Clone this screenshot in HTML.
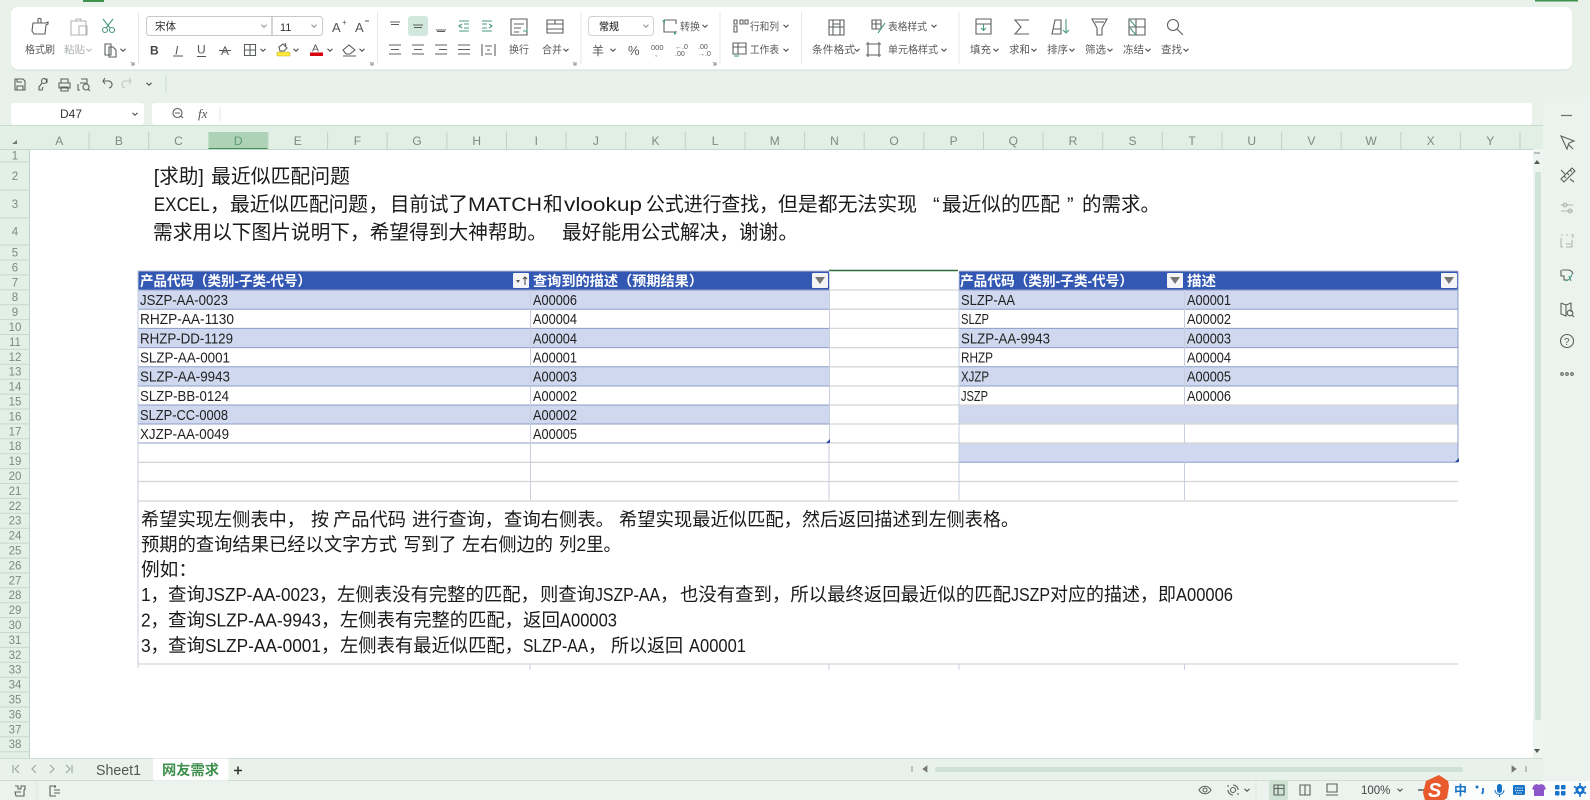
<!DOCTYPE html>
<html lang="zh-CN"><head><meta charset="utf-8"><title>网友需求</title>
<style>
html,body{margin:0;padding:0;background:#e8f2ea;width:1590px;height:800px;overflow:hidden}
svg{display:block}
text{font-family:"Liberation Sans","Noto Sans CJK SC",sans-serif;white-space:pre}
.i{fill:none;stroke:#5b605d;stroke-width:1.1}
.g{fill:none;stroke:#b0b6b2;stroke-width:1.1}
.t{fill:#4a9a80;stroke:none}
.tl{fill:none;stroke:#4a9a80;stroke-width:1.1}
.c{fill:none;stroke:#555;stroke-width:1.1}
.r{font-size:10.5px;fill:#585c59}
.ch{font-size:12px;fill:#7c8a80;text-anchor:middle}
.rh{font-size:11.5px;fill:#7c8a80;text-anchor:middle}
.h{font-size:14px;font-weight:700;fill:#fff}
.d{font-size:15px;fill:#222}
.m{font-size:19.7px;fill:#1a1a1a}
.p{font-size:18.5px;fill:#1a1a1a}
</style></head><body>
<svg xmlns="http://www.w3.org/2000/svg" width="1590" height="800" viewBox="0 0 1590 800">
<defs><path id="v" d="M-2.5-1.2L0 1.2L2.5-1.2" fill="none" stroke="#555" stroke-width="1.1"/></defs>
<rect width="1590" height="800" fill="#e8f2ea"/>
<rect x="83" y="0" width="21" height="2" fill="#3f9350"/>
<rect x="1535" y="0" width="43" height="1.5" fill="#3f9350"/>
<rect x="11" y="8" width="1561" height="62.5" rx="7" fill="#d4ddd7"/>
<rect x="11" y="7" width="1561" height="62.5" rx="7" fill="#fff"/>
<path d="M138.5 12V64M377.5 12V64M581 12V64M720 12V64M801.5 12V64M959 12V64" stroke="#e4e9e5"/>

<!-- clipboard -->
<path class="i" d="M33 23h13l2-1v2l-2 1-1 9H34l-2-3zM38 23v-4a2 2 0 0 1 3 0v4"/>
<text class="r" x="25" y="53" textLength="30" lengthAdjust="spacingAndGlyphs">格式刷</text>
<path class="g" d="M71 21h15v14H71zM76 21v-2h5v2M79 26h8v9h-8z"/>
<text class="r" x="64" y="53" textLength="21" lengthAdjust="spacingAndGlyphs" style="fill:#aab0ac">粘贴</text>
<use href="#v" x="89" y="50" opacity=".4"/>
<path class="tl" d="M103 19l7 9M113 19l-7 9"/><circle class="tl" cx="105" cy="30" r="2.5"/><circle class="tl" cx="112" cy="30" r="2.5"/>
<path class="i" d="M105 44h6v11h-6zM109 47h4l3 3v7h-7z"/>
<use href="#v" x="123" y="50"/>
<path d="M131 62l3 3M134 62v3h-3" class="c" opacity=".6"/>

<!-- font -->
<rect x="146.500" y="16.500" width="176" height="19" rx="3" fill="#fff" stroke="#c4cac6"/>
<path d="M272 16.500V35.500" stroke="#a8aeaa"/>
<text x="155" y="30" font-size="11" fill="#333" textLength="21" lengthAdjust="spacingAndGlyphs">宋体</text>
<use href="#v" x="264" y="26" opacity=".6"/>
<text x="280" y="31" font-size="11" fill="#333">11</text>
<use href="#v" x="314" y="26" opacity=".6"/>
<text x="332" y="32" font-size="13" fill="#555">A</text><text x="342" y="25" font-size="8" fill="#555">+</text>
<text x="355" y="32" font-size="13" fill="#555">A</text><path d="M365 21h4" stroke="#555"/>
<text x="150" y="54.500" font-size="12" font-weight="700" fill="#444">B</text>
<text x="175" y="54.500" font-size="12" font-style="italic" fill="#555">I</text><path d="M173 56h10" stroke="#555"/>
<text x="197" y="53.500" font-size="12" fill="#555">U</text><path d="M197 56.500h9" stroke="#555"/>
<text x="221" y="55" font-size="12" fill="#555">A</text><path d="M219 50.500h12" stroke="#555"/>
<path class="i" d="M244.500 44.500h11v11h-11zM250 44.500v11M244.500 50h11"/><use href="#v" x="263" y="50"/>
<path class="i" d="M279 47l4-3 4 4-3 3-4 0zM285 43l1 3"/><rect x="277" y="52" width="13" height="4" rx="1" fill="#ffe93b" stroke="#c2b52c" stroke-width=".6"/><use href="#v" x="296" y="50"/>
<text x="312" y="51.500" font-size="10.500" fill="#555">A</text><rect x="310" y="52.500" width="13" height="3.500" fill="#d6000f"/><use href="#v" x="330" y="50"/>
<path class="i" d="M343 50l6-5 6 5-5 4h-4zM343 56h13"/><use href="#v" x="362" y="50"/>
<path d="M370 62l3 3M373 62v3h-3" class="c" opacity=".6"/>

<!-- align -->
<rect x="408" y="16" width="20" height="20" rx="3" fill="#d2e7de"/>
<path class="i" d="M390 22h10M391 24.500h8M413 25h10M414 27.500h8M436 30h10M437 31.500h8"/>
<path class="tl" d="M459 21h10M459 31h10M464 24h5M464 28h5M462 24l-3 2 3 2"/><path class="tl" d="M482 21h10M482 31h10M482 24h5M482 28h5M489 24l3 2-3 2"/>
<path class="i" d="M389 45h12M391 49.500h8M389 54h12M412 45h12M414 49.500h8M412 54h12M435 45h12M439 49.500h8M435 54h12M458 45h12M458 49.500h12M458 54h12"/>
<path class="i" d="M482 44v12M495 44v12M485 46h7M485 54h7M487 50h3"/>
<path class="i" d="M511 19h16v16h-16zM514 24h10M514 28h7M514 32h5"/><path class="tl" d="M527 28v3h-4"/>
<text class="r" x="509" y="53" textLength="20" lengthAdjust="spacingAndGlyphs">换行</text>
<path class="i" d="M547 20h16v13h-16zM547 24h16M547 29h16M555 20v4"/>
<text class="r" x="542" y="53" textLength="20" lengthAdjust="spacingAndGlyphs">合并</text><use href="#v" x="566" y="50"/>
<path d="M573 62l3 3M576 62v3h-3" class="c" opacity=".6"/>

<!-- number -->
<rect x="588.500" y="16.500" width="65" height="19" rx="3" fill="#fff" stroke="#d0d5d1"/>
<text x="599" y="30" font-size="10.500" font-weight="500" fill="#333" textLength="20" lengthAdjust="spacingAndGlyphs">常规</text>
<use href="#v" x="646" y="26" opacity=".6"/>
<path class="i" d="M664 20h12v4M664 21v11h11M676 32v-1"/><path class="t" d="M662 21l3-2v4zM677 33l-3 2v-4z"/>
<text class="r" x="680" y="30" textLength="20" lengthAdjust="spacingAndGlyphs">转换</text><use href="#v" x="705" y="26"/>
<text x="592" y="55" font-size="12" fill="#555" textLength="12" lengthAdjust="spacingAndGlyphs">羊</text><use href="#v" x="613" y="50"/>
<text x="628" y="55" font-size="13" fill="#555">%</text>
<text x="651" y="50" font-size="7.500" fill="#555">000</text><text x="655" y="56" font-size="7.500" fill="#555">,</text>
<text x="675" y="49" font-size="7" fill="#555">←.0</text><text x="675" y="56" font-size="7" fill="#555">.00</text>
<text x="698" y="49" font-size="7" fill="#555">.00</text><text x="698" y="56" font-size="7" fill="#555">→.0</text>
<path d="M713 62l3 3M716 62v3h-3" class="c" opacity=".6"/>

<path class="i" d="M734 20h3v4h-3zM734 26h3v6h-3zM740 20h3v4h-3zM745 20h3v4h-3z"/>
<text class="r" x="750" y="30" textLength="29" lengthAdjust="spacingAndGlyphs">行和列</text><use href="#v" x="786" y="26"/>
<path class="i" d="M733 43h13v11h-13zM733 47h13M738 43v11"/><path class="tl" d="M734 56h5"/>
<text class="r" x="750" y="53" textLength="29" lengthAdjust="spacingAndGlyphs">工作表</text><use href="#v" x="786" y="50"/>

<path class="i" d="M829 20h15v15h-15zM833 20v15M840 20v15M829 27h15M833 24h7"/>
<text class="r" x="812" y="53" textLength="43" lengthAdjust="spacingAndGlyphs">条件格式</text><use href="#v" x="857" y="50"/>
<path class="i" d="M872 20h9v9h-9zM876 20v9M872 24h9"/><path class="tl" d="M878 33l7-10"/>
<text class="r" x="888" y="30" textLength="39" lengthAdjust="spacingAndGlyphs">表格样式</text><use href="#v" x="934" y="26"/>
<path class="i" d="M868 44h11v11h-11zM868 42v15M879 42v15M866 44h15M866 55h15"/>
<text class="r" x="888" y="53" textLength="50" lengthAdjust="spacingAndGlyphs">单元格样式</text><use href="#v" x="944" y="50"/>

<!-- edit -->
<path class="i" d="M976 19h15v15h-15zM976 24h15"/><path class="tl" d="M983.500 24v6M981 28l2.500 2.500 2.500-2.500"/>
<text class="r" x="970" y="53" textLength="21" lengthAdjust="spacingAndGlyphs">填充</text><use href="#v" x="996" y="50"/>
<path class="i" d="M1029 20h-14l6 7-6 7h14"/>
<text class="r" x="1009" y="53" textLength="21" lengthAdjust="spacingAndGlyphs">求和</text><use href="#v" x="1034" y="50"/>
<path class="i" d="M1055 20h6v14h-9zM1053 29h8"/><path class="tl" d="M1066 19v14M1063 30l3 3 3-3"/>
<text class="r" x="1047" y="53" textLength="21" lengthAdjust="spacingAndGlyphs">排序</text><use href="#v" x="1072" y="50"/>
<path class="i" d="M1092 19h15l-5 9v7h-5v-7z"/><path class="i" d="M1095 22h9"/>
<text class="r" x="1085" y="53" textLength="21" lengthAdjust="spacingAndGlyphs">筛选</text><use href="#v" x="1110" y="50"/>
<path class="i" d="M1129 19h16v16h-16zM1136 19v16M1129 27h16"/><path class="tl" d="M1130 20l6 7M1130 28l6 7"/>
<text class="r" x="1123" y="53" textLength="21" lengthAdjust="spacingAndGlyphs">冻结</text><use href="#v" x="1148" y="50"/>
<circle class="i" cx="1173" cy="25" r="5.500"/><path class="i" d="M1177 29l6 6"/>
<text class="r" x="1161" y="53" textLength="21" lengthAdjust="spacingAndGlyphs">查找</text><use href="#v" x="1186" y="50"/>

<!-- QAT -->
<path class="i" d="M15 79h8l2 2v9H15zM17 90v-4h6v4M17 79v3h5"/>
<circle class="i" cx="44" cy="81" r="2.500"/><path class="i" d="M42 83l-3 4v3h3l1-3M44 79h3v4"/>
<path class="i" d="M59 83h11v5H59zM61 83v-4h7v4M61 87h7v4h-7z"/>
<path class="i" d="M80 83h8M81 79h6v3M80 90h-2v-6"/><circle class="i" cx="86" cy="87" r="3"/><path class="i" d="M88 89l2 2"/>
<path class="i" d="M103 81h5a3.500 3.500 0 0 1 1 7M105 78l-2 3 2 3"/>
<path class="g" d="M131 81h-5a3.500 3.500 0 0 0-1 7M129 78l2 3-2 3" opacity=".7"/>
<use href="#v" x="149" y="84"/>
<path d="M166 76v16" stroke="#cdd9d0"/>

<!-- formula bar -->
<rect x="1543" y="97" width="47" height="683" fill="#ecf3ee"/>
<rect x="11" y="103" width="133" height="22" rx="3" fill="#fff"/>
<text x="60" y="118" font-size="12" fill="#333">D47</text><use href="#v" x="135" y="114"/>
<rect x="152" y="103" width="1380" height="22" rx="3" fill="#fff"/>
<circle class="i" cx="177.500" cy="113" r="4.500"/><path class="i" d="M175 113h5M181 116l2 2"/>
<text x="198" y="118" font-size="13" font-style="italic" fill="#555" style="font-family:'Liberation Serif',serif">fx</text>
<path d="M220 107v14" stroke="#e2e7e3"/>

<!-- col headers -->
<rect x="0" y="125" width="1543" height="25" fill="#e1efe5"/>
<path d="M0 125.500H1543" stroke="#cadccf"/>
<rect x="208.400" y="132" width="59.600" height="16" fill="#aed2b6"/>
<rect x="208.400" y="148" width="59.600" height="1.500" fill="#3f9350"/>
<path d="M89.100 132V149M148.700 132V149M268 132V149M327.600 132V149M387.200 132V149M446.900 132V149M506.500 132V149M566.100 132V149M625.700 132V149M685.300 132V149M745 132V149M804.600 132V149M864.200 132V149M923.800 132V149M983.500 132V149M1043.100 132V149M1102.700 132V149M1162.300 132V149M1221.900 132V149M1281.600 132V149M1341.200 132V149M1400.800 132V149M1460.400 132V149M1520 132V149" stroke="#c0d2c6"/>
<path d="M12 144l5-4v4z" fill="#777"/>
<text class="ch" x="59.300" y="145">A</text><text class="ch" x="118.900" y="145">B</text><text class="ch" x="178.500" y="145">C</text><text class="ch" x="238.200" y="145" style="fill:#5f9c6f">D</text><text class="ch" x="297.800" y="145">E</text><text class="ch" x="357.400" y="145">F</text><text class="ch" x="417" y="145">G</text><text class="ch" x="476.700" y="145">H</text><text class="ch" x="536.300" y="145">I</text><text class="ch" x="595.900" y="145">J</text><text class="ch" x="655.500" y="145">K</text><text class="ch" x="715.100" y="145">L</text><text class="ch" x="774.800" y="145">M</text><text class="ch" x="834.400" y="145">N</text><text class="ch" x="894" y="145">O</text><text class="ch" x="953.600" y="145">P</text><text class="ch" x="1013.300" y="145">Q</text><text class="ch" x="1072.900" y="145">R</text><text class="ch" x="1132.500" y="145">S</text><text class="ch" x="1192.100" y="145">T</text><text class="ch" x="1251.700" y="145">U</text><text class="ch" x="1311.400" y="145">V</text><text class="ch" x="1371" y="145">W</text><text class="ch" x="1430.600" y="145">X</text><text class="ch" x="1490.200" y="145">Y</text>

<!-- sheet -->
<rect x="29.500" y="149" width="1503.500" height="610" fill="#fff"/>
<rect x="0" y="149" width="29.500" height="610" fill="#e3f0e6"/>
<path d="M29.500 149V759" stroke="#bfd2c5"/>
<path d="M0 149.500H1533" stroke="#c6d8cc"/>
<path d="M0 162h29M0 190h29M0 218h29M0 245h29M0 260h29M0 274.900h29M0 289.800h29M0 304.700h29M0 319.600h29M0 334.500h29M0 349.400h29M0 364.300h29M0 379.200h29M0 394.100h29M0 409h29M0 423.900h29M0 438.800h29M0 453.700h29M0 468.600h29M0 483.500h29M0 498.400h29M0 513.300h29M0 528.200h29M0 543.100h29M0 558h29M0 572.900h29M0 587.800h29M0 602.700h29M0 617.600h29M0 632.500h29M0 647.400h29M0 662.300h29M0 677.200h29M0 692.100h29M0 707h29M0 721.900h29M0 736.800h29M0 751.700h29" stroke="#c6d8cc"/>
<text class="rh" x="15" y="159.500">1</text><text class="rh" x="15" y="180">2</text><text class="rh" x="15" y="208">3</text><text class="rh" x="15" y="235.500">4</text><text class="rh" x="15" y="256.500">5</text><text class="rh" x="15" y="271.400">6</text><text class="rh" x="15" y="286.300">7</text><text class="rh" x="15" y="301.200">8</text><text class="rh" x="15" y="316.100">9</text><text class="rh" x="15" y="331">10</text><text class="rh" x="15" y="345.900">11</text><text class="rh" x="15" y="360.800">12</text><text class="rh" x="15" y="375.700">13</text><text class="rh" x="15" y="390.600">14</text><text class="rh" x="15" y="405.500">15</text><text class="rh" x="15" y="420.400">16</text><text class="rh" x="15" y="435.300">17</text><text class="rh" x="15" y="450.200">18</text><text class="rh" x="15" y="465.100">19</text><text class="rh" x="15" y="480">20</text><text class="rh" x="15" y="494.900">21</text><text class="rh" x="15" y="509.800">22</text><text class="rh" x="15" y="524.700">23</text><text class="rh" x="15" y="539.600">24</text><text class="rh" x="15" y="554.500">25</text><text class="rh" x="15" y="569.400">26</text><text class="rh" x="15" y="584.300">27</text><text class="rh" x="15" y="599.200">28</text><text class="rh" x="15" y="614.100">29</text><text class="rh" x="15" y="629">30</text><text class="rh" x="15" y="643.900">31</text><text class="rh" x="15" y="658.800">32</text><text class="rh" x="15" y="673.700">33</text><text class="rh" x="15" y="688.600">34</text><text class="rh" x="15" y="703.500">35</text><text class="rh" x="15" y="718.400">36</text><text class="rh" x="15" y="733.300">37</text><text class="rh" x="15" y="748.200">38</text>

<!-- title -->
<text class="m" x="153.800" y="183" textLength="50" lengthAdjust="spacingAndGlyphs">[求助]</text>
<text class="m" x="211" y="183" textLength="139" lengthAdjust="spacingAndGlyphs">最近似匹配问题</text>
<text class="m" x="153.800" y="211" textLength="56" lengthAdjust="spacingAndGlyphs">EXCEL</text>
<text class="m" x="210" y="211">，</text>
<text class="m" x="230" y="211" textLength="138" lengthAdjust="spacingAndGlyphs">最近似匹配问题</text>
<text class="m" x="368.500" y="211">，</text>
<text class="m" x="390" y="211" textLength="78" lengthAdjust="spacingAndGlyphs">目前试了</text>
<text class="m" x="468" y="211" textLength="74" lengthAdjust="spacingAndGlyphs">MATCH</text>
<text class="m" x="543" y="211">和</text>
<text class="m" x="564" y="211" textLength="78" lengthAdjust="spacingAndGlyphs">vlookup</text>
<text class="m" x="646" y="211" textLength="132" lengthAdjust="spacingAndGlyphs">公式进行查找，</text>
<text class="m" x="778" y="211" textLength="139" lengthAdjust="spacingAndGlyphs">但是都无法实现</text>
<text class="m" x="933" y="211">“</text>
<text class="m" x="942" y="211" textLength="118" lengthAdjust="spacingAndGlyphs">最近似的匹配</text>
<text class="m" x="1067" y="211">”</text>
<text class="m" x="1082" y="211" textLength="78" lengthAdjust="spacingAndGlyphs">的需求。</text>
<text class="m" x="153" y="239" textLength="394" lengthAdjust="spacingAndGlyphs">需求用以下图片说明下，希望得到大神帮助。</text>
<text class="m" x="562" y="239" textLength="236" lengthAdjust="spacingAndGlyphs">最好能用公式解决，谢谢。</text>

<!-- table bands -->
<rect x="138" y="271" width="691" height="19" fill="#3358b4"/>
<rect x="959" y="271" width="499" height="19" fill="#3358b4"/>
<rect x="138" y="290" width="691" height="19.200" fill="#cfd8ee"/>
<rect x="138" y="328.400" width="691" height="19.200" fill="#cfd8ee"/>
<rect x="138" y="366.800" width="691" height="19.200" fill="#cfd8ee"/>
<rect x="138" y="405" width="691" height="19" fill="#cfd8ee"/>
<rect x="959" y="290" width="499" height="19.200" fill="#cfd8ee"/>
<rect x="959" y="328.400" width="499" height="19.200" fill="#cfd8ee"/>
<rect x="959" y="366.800" width="499" height="19.200" fill="#cfd8ee"/>
<rect x="959" y="405" width="499" height="19" fill="#cfd8ee"/>
<rect x="959" y="443" width="499" height="19.300" fill="#cfd8ee"/>
<path d="M138 290H829M138 309.200H829M138 328.400H829M138 347.600H829M138 366.800H829M138 386H829M138 405H829M138 424H829M138 443H829M959 290H1458M959 309.200H1458M959 328.400H1458M959 347.600H1458M959 366.800H1458M959 386H1458M959 462.300H1458" stroke="#8c9dca" stroke-width="1"/>
<path d="M829 290H959M829 309.200H959M829 328.400H959M829 347.600H959M829 366.800H959M829 386H959M829 405H959M829 424H959M829 443H959M138 462.300H959M138 481.500H1458M959 405H1458M959 424H1458M959 443H1458M138 501H1458M138 664H1458" stroke="#d5d5d8" stroke-width="1.300"/>
<path d="M829.500 273V443M959 273V500M138 271V668M530.500 290V500M1184.500 290V405M1184.500 424V443M1184.500 462V500M530 664V670M829 443V500M829 664V670M959 664V670M1184.500 664V670" stroke="#c6cedf" stroke-width="1"/>
<path d="M1458 271V462" stroke="#8c9dca"/>
<path d="M829 270.500H958" stroke="#2f6b3d" stroke-width="1.500"/>
<path d="M138 271H829M959 271H1458" stroke="#b6bcc8"/>
<path d="M826 443l4-4v4zM1455 462l4-4v4z" fill="#2b4ea4"/>

<!-- header text -->
<text class="h" x="140" y="286" textLength="171" lengthAdjust="spacingAndGlyphs">产品代码（类别-子类-代号）</text>
<text class="h" x="533" y="286" textLength="170" lengthAdjust="spacingAndGlyphs">查询到的描述（预期结果）</text>
<text class="h" x="960" y="286" textLength="173" lengthAdjust="spacingAndGlyphs">产品代码（类别-子类-代号）</text>
<text class="h" x="1187" y="286" textLength="29" lengthAdjust="spacingAndGlyphs">描述</text>
<rect x="513" y="273" width="16" height="15" rx="1" fill="#f4f4f6"/><path d="M516 280h4l-2 3z" fill="#555"/><path d="M525 277v8M523 279l2-2 2 2" stroke="#444" fill="none"/>
<rect x="812" y="273" width="16" height="15" rx="1" fill="#f4f4f6"/><path d="M815 277h10l-5 7z" fill="#777"/>
<rect x="1167" y="273" width="16" height="15" rx="1" fill="#f4f4f6"/><path d="M1170 277h10l-5 7z" fill="#777"/>
<rect x="1441" y="273" width="16" height="15" rx="1" fill="#f4f4f6"/><path d="M1444 277h10l-5 7z" fill="#777"/>

<!-- data -->
<text class="d" x="140" y="305" textLength="88" lengthAdjust="spacingAndGlyphs">JSZP-AA-0023</text>
<text class="d" x="140" y="324" textLength="94" lengthAdjust="spacingAndGlyphs">RHZP-AA-1130</text>
<text class="d" x="140" y="343.500" textLength="93" lengthAdjust="spacingAndGlyphs">RHZP-DD-1129</text>
<text class="d" x="140" y="362.500" textLength="90" lengthAdjust="spacingAndGlyphs">SLZP-AA-0001</text>
<text class="d" x="140" y="381.500" textLength="90" lengthAdjust="spacingAndGlyphs">SLZP-AA-9943</text>
<text class="d" x="140" y="401" textLength="89" lengthAdjust="spacingAndGlyphs">SLZP-BB-0124</text>
<text class="d" x="140" y="420" textLength="88" lengthAdjust="spacingAndGlyphs">SLZP-CC-0008</text>
<text class="d" x="140" y="439" textLength="89" lengthAdjust="spacingAndGlyphs">XJZP-AA-0049</text>
<text class="d" x="533" y="305" textLength="44" lengthAdjust="spacingAndGlyphs">A00006</text>
<text class="d" x="533" y="324" textLength="44" lengthAdjust="spacingAndGlyphs">A00004</text>
<text class="d" x="533" y="343.500" textLength="44" lengthAdjust="spacingAndGlyphs">A00004</text>
<text class="d" x="533" y="362.500" textLength="44" lengthAdjust="spacingAndGlyphs">A00001</text>
<text class="d" x="533" y="381.500" textLength="44" lengthAdjust="spacingAndGlyphs">A00003</text>
<text class="d" x="533" y="401" textLength="44" lengthAdjust="spacingAndGlyphs">A00002</text>
<text class="d" x="533" y="420" textLength="44" lengthAdjust="spacingAndGlyphs">A00002</text>
<text class="d" x="533" y="439" textLength="44" lengthAdjust="spacingAndGlyphs">A00005</text>
<text class="d" x="961" y="305" textLength="54" lengthAdjust="spacingAndGlyphs">SLZP-AA</text>
<text class="d" x="961" y="324" textLength="28" lengthAdjust="spacingAndGlyphs">SLZP</text>
<text class="d" x="961" y="343.500" textLength="89" lengthAdjust="spacingAndGlyphs">SLZP-AA-9943</text>
<text class="d" x="961" y="362.500" textLength="32" lengthAdjust="spacingAndGlyphs">RHZP</text>
<text class="d" x="961" y="381.500" textLength="28" lengthAdjust="spacingAndGlyphs">XJZP</text>
<text class="d" x="961" y="401" textLength="27" lengthAdjust="spacingAndGlyphs">JSZP</text>
<text class="d" x="1187" y="305" textLength="44" lengthAdjust="spacingAndGlyphs">A00001</text>
<text class="d" x="1187" y="324" textLength="44" lengthAdjust="spacingAndGlyphs">A00002</text>
<text class="d" x="1187" y="343.500" textLength="44" lengthAdjust="spacingAndGlyphs">A00003</text>
<text class="d" x="1187" y="362.500" textLength="44" lengthAdjust="spacingAndGlyphs">A00004</text>
<text class="d" x="1187" y="381.500" textLength="44" lengthAdjust="spacingAndGlyphs">A00005</text>
<text class="d" x="1187" y="401" textLength="44" lengthAdjust="spacingAndGlyphs">A00006</text>

<!-- paragraph -->
<text class="p" x="141" y="526" textLength="164" lengthAdjust="spacingAndGlyphs">希望实现左侧表中，</text>
<text class="p" x="311" y="526" textLength="18" lengthAdjust="spacingAndGlyphs">按</text>
<text class="p" x="333" y="526" textLength="73" lengthAdjust="spacingAndGlyphs">产品代码</text>
<text class="p" x="412" y="526" textLength="91" lengthAdjust="spacingAndGlyphs">进行查询，</text>
<text class="p" x="504" y="526" textLength="110" lengthAdjust="spacingAndGlyphs">查询右侧表。</text>
<text class="p" x="619" y="526" textLength="183" lengthAdjust="spacingAndGlyphs">希望实现最近似匹配，</text>
<text class="p" x="802" y="526" textLength="217" lengthAdjust="spacingAndGlyphs">然后返回描述到左侧表格。</text>

<text class="p" x="141" y="551" textLength="256" lengthAdjust="spacingAndGlyphs">预期的查询结果已经以文字方式</text>
<text class="p" x="403.500" y="551" textLength="53" lengthAdjust="spacingAndGlyphs">写到了</text>
<text class="p" x="462" y="551" textLength="91" lengthAdjust="spacingAndGlyphs">左右侧边的</text>
<text class="p" x="559" y="551" textLength="62" lengthAdjust="spacingAndGlyphs">列2里。</text>

<text class="p" x="141" y="576" textLength="56" lengthAdjust="spacingAndGlyphs">例如：</text>

<text class="p" x="141" y="601" textLength="27" lengthAdjust="spacingAndGlyphs">1，</text>
<text class="p" x="168" y="601" textLength="37" lengthAdjust="spacingAndGlyphs">查询</text>
<text class="p" x="205" y="601" textLength="114" lengthAdjust="spacingAndGlyphs">JSZP-AA-0023</text>
<text class="p" x="319" y="601">，</text>
<text class="p" x="337" y="601" textLength="202" lengthAdjust="spacingAndGlyphs">左侧表没有完整的匹配，</text>
<text class="p" x="540" y="601" textLength="55" lengthAdjust="spacingAndGlyphs">则查询</text>
<text class="p" x="595" y="601" textLength="65" lengthAdjust="spacingAndGlyphs">JSZP-AA</text>
<text class="p" x="660" y="601">，</text>
<text class="p" x="680" y="601" textLength="331" lengthAdjust="spacingAndGlyphs">也没有查到，所以最终返回最近似的匹配</text>
<text class="p" x="1011" y="601" textLength="39" lengthAdjust="spacingAndGlyphs">JSZP</text>
<text class="p" x="1050" y="601" textLength="126" lengthAdjust="spacingAndGlyphs">对应的描述，即</text>
<text class="p" x="1176" y="601" textLength="57" lengthAdjust="spacingAndGlyphs">A00006</text>

<text class="p" x="141" y="626.500" textLength="27" lengthAdjust="spacingAndGlyphs">2，</text>
<text class="p" x="168" y="626.500" textLength="37" lengthAdjust="spacingAndGlyphs">查询</text>
<text class="p" x="205" y="626.500" textLength="116" lengthAdjust="spacingAndGlyphs">SLZP-AA-9943</text>
<text class="p" x="321" y="626.500">，</text>
<text class="p" x="340" y="626.500" textLength="183" lengthAdjust="spacingAndGlyphs">左侧表有完整的匹配，</text>
<text class="p" x="523" y="626.500" textLength="37" lengthAdjust="spacingAndGlyphs">返回</text>
<text class="p" x="560" y="626.500" textLength="57" lengthAdjust="spacingAndGlyphs">A00003</text>

<text class="p" x="141" y="652" textLength="27" lengthAdjust="spacingAndGlyphs">3，</text>
<text class="p" x="168" y="652" textLength="37" lengthAdjust="spacingAndGlyphs">查询</text>
<text class="p" x="205" y="652" textLength="116" lengthAdjust="spacingAndGlyphs">SLZP-AA-0001</text>
<text class="p" x="321" y="652">，</text>
<text class="p" x="340" y="652" textLength="183" lengthAdjust="spacingAndGlyphs">左侧表有最近似匹配，</text>
<text class="p" x="523" y="652" textLength="65" lengthAdjust="spacingAndGlyphs">SLZP-AA</text>
<text class="p" x="588" y="652">，</text>
<text class="p" x="611" y="652" textLength="72" lengthAdjust="spacingAndGlyphs">所以返回</text>
<text class="p" x="689" y="652" textLength="57" lengthAdjust="spacingAndGlyphs">A00001</text>

<!-- v scrollbar / sidebar -->
<rect x="1533" y="149" width="10" height="610" fill="#eef5f0"/>
<rect x="1535" y="172" width="6" height="548" rx="2" fill="#cfe3d8"/>
<path d="M1534 153h6" stroke="#889"/><path d="M1537 160l3 4h-6z" fill="#555"/>
<path d="M1537 753l3-4h-6z" fill="#555"/>
<path d="M1561 115.500h11" stroke="#6a706c" stroke-width="1.200"/>
<path class="i" d="M1561 136l13 5-5 2-2 6z"/><path class="i" d="M1568 144l5 5"/>
<path class="i" d="M1561 179l11-11 3 3-11 11zM1564 176l2 2M1567 173l2 2M1570 170l2 2M1561 170l4 4M1570 179l4 3"/>
<path class="g" d="M1561 205h12M1561 211h12"/><circle class="g" cx="1565" cy="205" r="2"/><circle class="g" cx="1570" cy="211" r="2"/>
<path class="g" d="M1561 235h2M1566 235h2M1571 235h2v3M1561 238v9h2M1566 247h6v-7M1566 244h5"/>
<path class="i" d="M1562 270h6a5 5 0 0 1 5 4M1561 270v6h3v4h4"/><path class="tl" d="M1566 281c3-1 5-3 6-7M1569 276l2 5"/>
<path class="i" d="M1561 303l5 2 5-2v9M1561 303v11l5 2v-11"/><circle class="i" cx="1570" cy="313" r="2.800"/><path class="i" d="M1572 315l2 2"/>
<circle class="i" cx="1567" cy="341" r="6.500"/><text x="1564" y="345" font-size="10" fill="#5b605d">?</text>
<circle class="i" cx="1562" cy="374" r="1.300"/><circle class="i" cx="1567" cy="374" r="1.300"/><circle class="i" cx="1572" cy="374" r="1.300"/>

<!-- tab bar -->
<rect x="0" y="758.500" width="1543" height="22" fill="#e8f2ea"/>
<path d="M0 758.500H1543M0 780.500H1543" stroke="#cfdcd2"/>
<path d="M13 765v8M19 765l-4 4 4 4M36 765l-4 4 4 4M50 765l4 4-4 4M66 765l4 4-4 4M72 765v8" fill="none" stroke="#9aa59d" stroke-width="1.100"/>
<text x="96" y="775" font-size="15" fill="#555" textLength="45" lengthAdjust="spacingAndGlyphs">Sheet1</text>
<path d="M153 758.500h75.500v20a2 2 0 0 1-2 2h-71.500a2 2 0 0 1-2-2z" fill="#fff"/>
<text x="162" y="775" font-size="14" font-weight="700" fill="#3f8f4d" textLength="57" lengthAdjust="spacingAndGlyphs">网友需求</text>
<path d="M234 770.500h8M238 766.500v8" stroke="#333" stroke-width="1.600"/>
<path d="M912 766v6M923 769l4-3v6zM1512 766l4 3-4 3zM1526 766v6" fill="#777" stroke="#777" stroke-width=".8"/>
<rect x="935" y="767" width="528" height="5" rx="2" fill="#cfe0d7"/>
<rect x="0" y="781" width="1590" height="19" fill="#ecf3ee"/>

<!-- status -->
<path class="i" d="M15 786h3v3h3v-3h4v3l-1 1v6h-8l-1-4h6"/>
<path class="i" d="M56 786h-6v10h6M54 790h6M54 793h6M54 787h2"/>
<path d="M37 781v19" stroke="#dbe5de"/>
<path class="i" d="M1199 790c3-5 9-5 12 0-3 5-9 5-12 0z"/><circle class="i" cx="1205" cy="790" r="2"/>
<circle class="i" cx="1233" cy="790" r="2.500"/><path class="i" d="M1233 785a5 5 0 0 1 5 5M1233 795a5 5 0 0 1-5-5M1228 787v-2M1238 793v2"/>
<use href="#v" x="1247" y="790"/>
<path d="M1256 781v19" stroke="#dbe5de"/>
<rect x="1269" y="781" width="19" height="19" rx="2" fill="#cfe3d5"/>
<path class="i" d="M1274 785h10v10h-10zM1274 788.500h10M1278 785v10"/>
<path class="i" d="M1300 785h10v10h-10zM1305 785v10"/>
<path class="i" d="M1327 784h10v8h-10zM1326 795h12"/>
<text x="1361" y="794" font-size="11.500" fill="#444">100%</text>
<use href="#v" x="1400" y="790"/>
<path d="M1418 790h10" stroke="#444" stroke-width="1.300"/>

<!-- IME -->
<rect x="1449" y="781" width="141" height="19" fill="#fbfdfc"/>
<path d="M1439 775l9 6 1 5-2 12-3 2h-19l-2-7 3-12z" fill="#e85a2b"/>
<text x="1428" y="797" font-size="20" font-weight="700" font-style="italic" fill="#fff">S</text>
<text x="1454" y="795" font-size="13" font-weight="700" fill="#1673c8">中</text>
<circle cx="1477" cy="787" r="1.500" fill="#1673c8"/><path d="M1483 788v4l-1 2" stroke="#1673c8" stroke-width="1.800" fill="none"/>
<rect x="1497" y="784" width="5" height="9" rx="2.500" fill="#1673c8"/><path d="M1495 790a4.500 4.500 0 0 0 9 0M1499.500 795v2" stroke="#1673c8" fill="none"/>
<rect x="1513" y="785" width="12" height="10" rx="1.500" fill="#1673c8"/><path d="M1515 788h8M1515 790.500h8M1516 793h6" stroke="#fff" stroke-width=".9" stroke-dasharray="1 .8"/>
<path d="M1534 785l3-1 2 1 2-1 3 1 2 4-2 1v6h-10v-6l-2-1z" fill="#8c55c9"/>
<rect x="1555" y="785" width="4.500" height="4.500" rx="1" fill="#1673c8"/><rect x="1561" y="785" width="4.500" height="4.500" rx="1" fill="#1673c8"/><rect x="1555" y="791" width="4.500" height="4.500" rx="1" fill="#1673c8"/><rect x="1561" y="791" width="4.500" height="4.500" rx="1" fill="#1673c8"/>
<circle cx="1580" cy="790" r="4.500" fill="#1673c8"/><path d="M1580 783v14M1574 786.500l12 7M1574 793.500l12-7" stroke="#1673c8" stroke-width="1.600"/><circle cx="1580" cy="790" r="1.700" fill="#fff"/>
</svg>
</body></html>
